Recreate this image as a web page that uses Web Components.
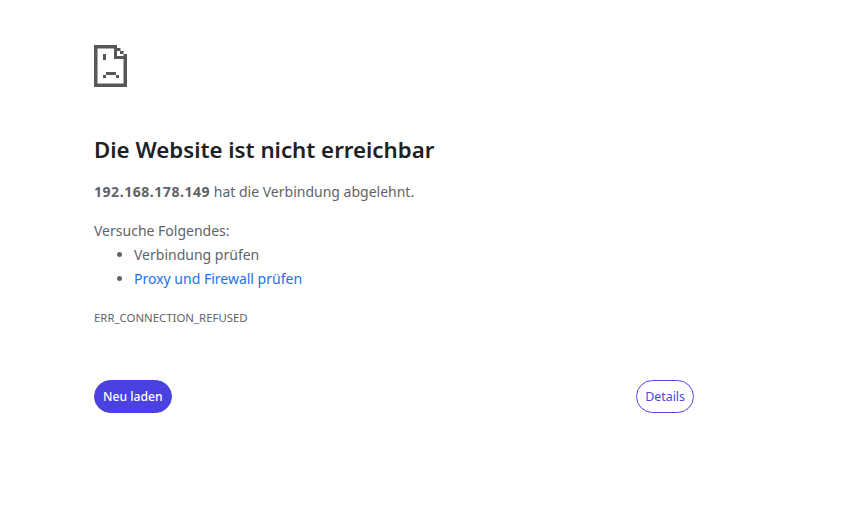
<!DOCTYPE html>
<html lang="de">
<head>
<meta charset="utf-8">
<title>Die Website ist nicht erreichbar</title>
<style>
  html, body { margin: 0; background: #fff; }
  body { font-family: "Noto Sans", "Open Sans", sans-serif; color: #5f6368; }
</style>
</head>
<body>
<error-page>
  <sad-icon slot="icon"></sad-icon>
  <span slot="title">Die Website ist nicht erreichbar</span>
  <span slot="summary"><b style="letter-spacing:.55px">192.168.178.149</b> hat die Verbindung abgelehnt.</span>
  <span slot="hint">Versuche Folgendes:</span>
  <li slot="tips">Verbindung prüfen</li>
  <li slot="tips" class="link"><a href="#" style="color:#1a73e8;text-decoration:none">Proxy und Firewall prüfen</a></li>
  <span slot="code">ERR_CONNECTION_REFUSED</span>
  <pill-button slot="reload" filled>Neu laden</pill-button>
  <pill-button slot="details">Details</pill-button>
</error-page>

<script>
class SadIcon extends HTMLElement {
  constructor() {
    super();
    this.attachShadow({ mode: 'open' }).innerHTML = `
      <style>
        :host { display: block; width: 33px; height: 42px; }
        svg { display: block; }
      </style>
      <svg width="33" height="42" viewBox="0 0 33 42" fill="#575757">
        <rect x="0" y="0" width="23" height="3.5"/>
        <rect x="0" y="0" width="3.5" height="42"/>
        <rect x="0" y="38.5" width="33" height="3.5"/>
        <rect x="29.5" y="9" width="3.5" height="33"/>
        <rect x="20" y="0" width="3" height="14"/>
        <rect x="20" y="11" width="13" height="3"/>
        <rect x="23" y="3" width="3.5" height="3"/>
        <rect x="26" y="6" width="3.5" height="3"/>
        <rect x="9" y="9" width="3" height="6"/>
        <rect x="12" y="27" width="10" height="3"/>
        <rect x="9" y="30" width="3" height="3"/>
        <rect x="22" y="30" width="3" height="3"/>
      </svg>`;
  }
}
customElements.define('sad-icon', SadIcon);

class PillButton extends HTMLElement {
  constructor() {
    super();
    this.attachShadow({ mode: 'open' }).innerHTML = `
      <style>
        :host {
          display: inline-flex;
          align-items: center;
          justify-content: center;
          box-sizing: border-box;
          height: 33px;
          padding: 0 8px;
          border: 1px solid #4f46e5;
          border-radius: 17px;
          background: #fff;
          color: #4f46e5;
          font-size: 12.4px;
          cursor: pointer;
        }
        :host([filled]) {
          background: #4a41e0;
          border-color: #4a41e0;
          color: #fff;
          font-size: 12.2px;
          font-weight: 500;
        }
      </style>
      <slot></slot>`;
  }
}
customElements.define('pill-button', PillButton);

class ErrorPage extends HTMLElement {
  constructor() {
    super();
    this.attachShadow({ mode: 'open' }).innerHTML = `
      <style>
        :host {
          display: block;
          box-sizing: border-box;
          width: 600px;
          margin-left: 94px;
          padding-top: 45px;
          font-size: 14px;
          line-height: 24px;
        }
        .title {
          margin: 47px 0 0;
          color: #202124;
          font-size: 22.27px;
          font-weight: 600;
          line-height: 32px;
        }
        .summary { margin-top: 14px; }
        .hint { margin-top: 15px; }
        ul { margin: 0; padding-left: 40px; }
        .code {
          margin-top: 19px;
          font-size: 11.4px;
          line-height: 16px;
        }
        .buttons {
          display: flex;
          justify-content: space-between;
          margin-top: 54px;
        }
      </style>
      <slot name="icon"></slot>
      <h1 class="title"><slot name="title"></slot></h1>
      <div class="summary"><slot name="summary"></slot></div>
      <div class="hint"><slot name="hint"></slot></div>
      <ul><slot name="tips"></slot></ul>
      <div class="code"><slot name="code"></slot></div>
      <div class="buttons">
        <slot name="reload"></slot>
        <slot name="details"></slot>
      </div>`;
  }
}
customElements.define('error-page', ErrorPage);
</script>
</body>
</html>
